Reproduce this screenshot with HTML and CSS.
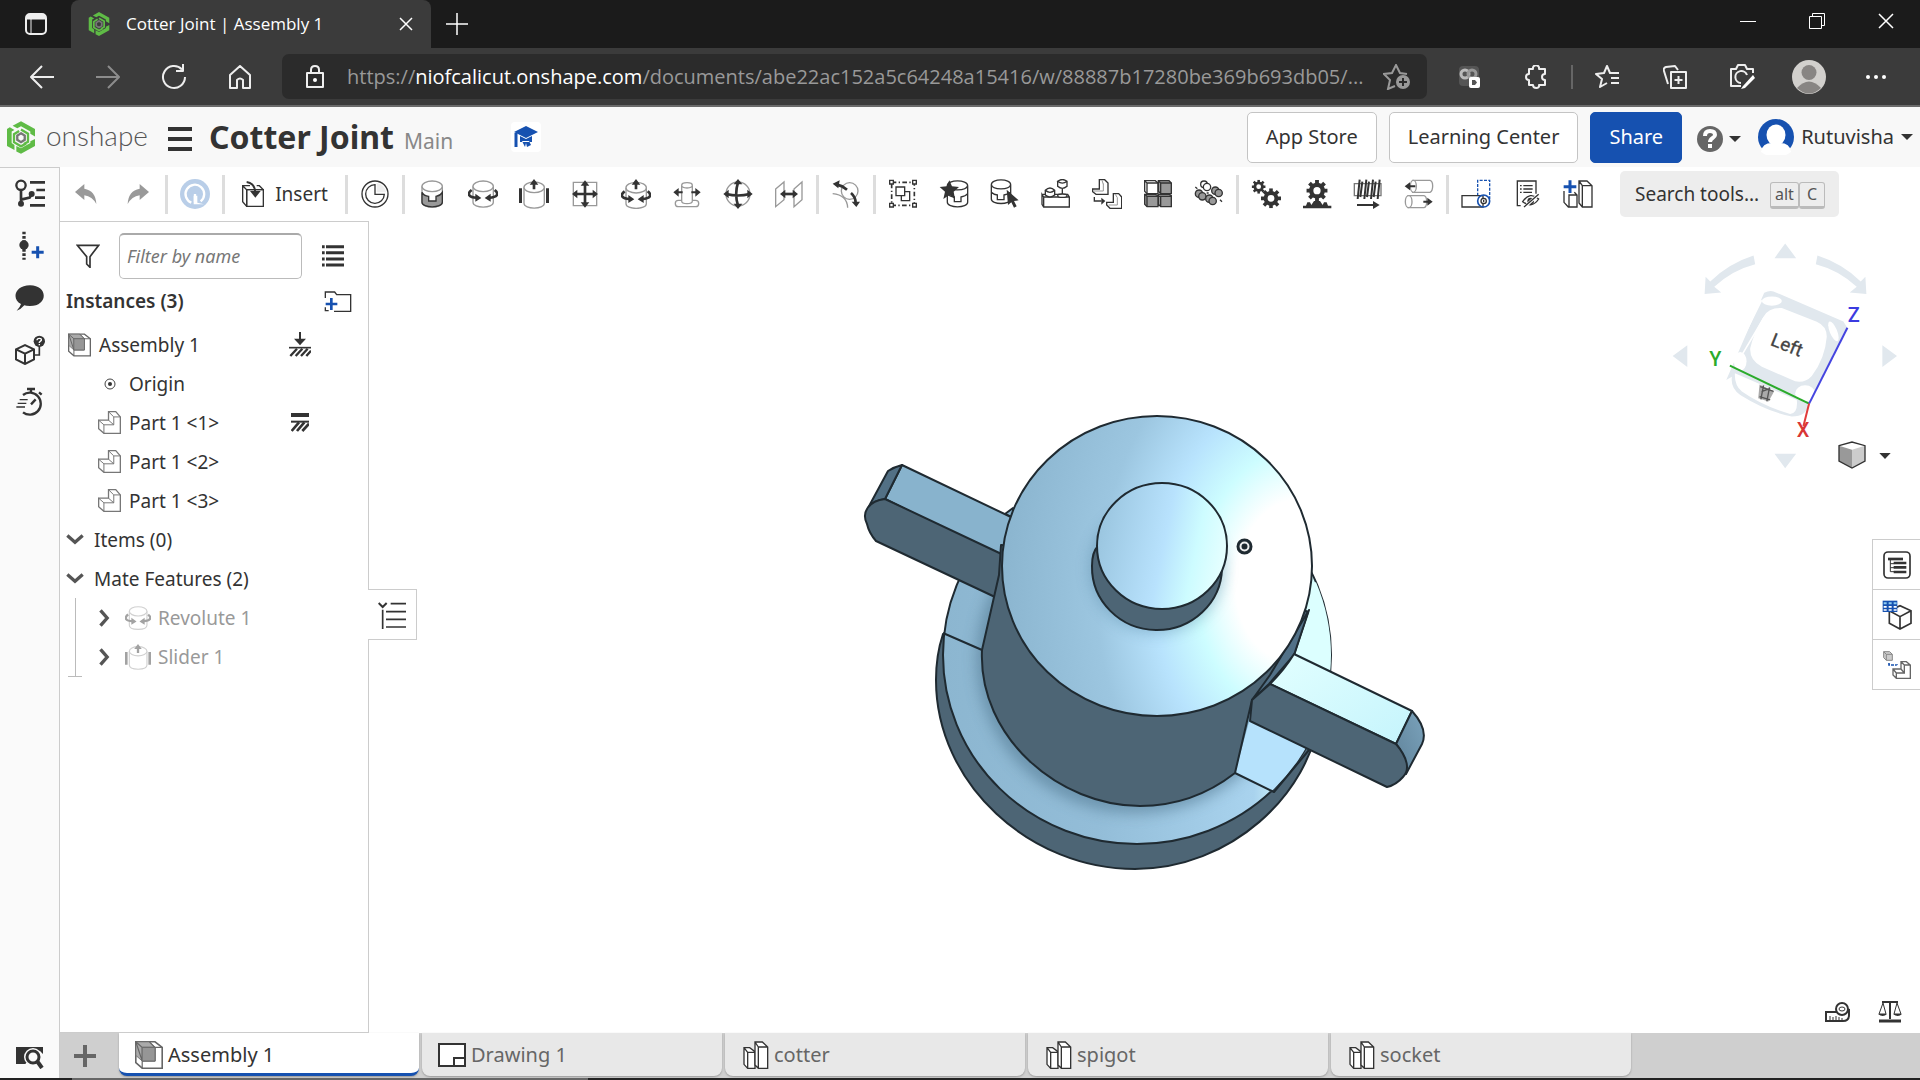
FILE: index.html
```html
<!DOCTYPE html>
<html lang="en">
<head>
<meta charset="utf-8">
<title>Cotter Joint | Assembly 1</title>
<link rel="stylesheet" href="styles.css">
</head>
<body>
<svg class="defs" aria-hidden="true">
  <symbol id="logo" viewBox="0 0 60 70">
    <path d="M30 0 60 17V33L50 27V22L30 11 22 15 12 10zM6 13 16 19 10 22V47L16 51V62L0 53V17zM60 38V53L30 70 20 65V53L30 58 50 47V43z" fill="#5fbb46"/>
    <path d="M30 18 45 27V44L36 49M41 48 30 54 15 45V28L26 21" fill="none" stroke="#5fbb46" stroke-width="5"/>
    <path d="M30 26 38 31V40L30 45 22 40V31z" fill="none" stroke="#777" stroke-width="5"/>
  </symbol>
  <symbol id="part" viewBox="0 0 70 70">
    <path d="M2 28H32V2H54L68 18V68H18L2 54z" fill="#fff" stroke="#777" stroke-width="4"/>
    <path d="M2 28 18 42H48V18H68M32 2 48 18M32 28 48 42M18 42V68" fill="none" stroke="#777" stroke-width="3"/>
  </symbol>
  <symbol id="assembly" viewBox="0 0 70 70">
    <path d="M2 2H50L68 16V68H18L2 54z" fill="#fff" stroke="#666" stroke-width="4"/>
    <path d="M2 2H36L50 16V50H18L2 36z" fill="#aaa" stroke="#666" stroke-width="2"/>
    <path d="M2 2 18 16H50V50H18zM18 16V68M36 2 50 16H68" fill="none" stroke="#666" stroke-width="3"/>
    <path d="M18 16H50V50H18z" fill="#969696" stroke="#666" stroke-width="2"/>
  </symbol>
  <symbol id="studio" viewBox="0 0 78 84">
    <path d="M3 20H20L36 32V82H14L3 70zM14 82V34H36M3 20 14 34" class="ln4"/>
    <path d="M36 3H58L74 18V82H46L36 72zM46 82V18H74M36 3 46 18" class="ln4"/>
  </symbol>
  <symbol id="cyl" viewBox="0 0 90 90">
    <path d="M15 22V70C15 89 76 89 76 70V22" fill="#fff" stroke="#999" stroke-width="4"/>
    <ellipse cx="45.500" cy="22" rx="30.500" ry="16" fill="#fff" stroke="#999" stroke-width="4"/>
  </symbol>
  <symbol id="revolve" viewBox="0 0 90 90">
    <path d="M11 33C-5 45 3 55 26 56M80 33C95 45 87 55 64 56" fill="none" stroke="#333" stroke-width="8"/>
    <path d="M22 44 40 57 22 68zM68 44 50 57 68 68z" fill="#333"/>
  </symbol>
  <symbol id="i-revolute" viewBox="0 0 90 90"><use href="#cyl" width="90" height="90"/><use href="#revolve" width="90" height="90"/></symbol>
  <symbol id="i-slider" viewBox="0 0 90 90"><use href="#cyl" y="3" width="90" height="90"/><path d="M0 28H9V72H0zM81 28H90V72H81zM45 0 58 17H49V31H41V17H32z" fill="#333"/></symbol>
  <symbol id="chev" viewBox="0 0 54 32"><path d="M4 4 27 24 50 4" fill="none" stroke="#555" stroke-width="10"/></symbol>
  <symbol id="gear" viewBox="-50 -50 100 100">
    <circle r="27" fill="none" stroke="#333" stroke-width="20"/>
    <path d="M-9-50H9V-30H-9zM-9 30H9V50H-9zM-50-9H-30V9H-50zM30-9H50V9H30z" fill="#333"/>
    <path d="M-9-50H9V-30H-9zM-9 30H9V50H-9zM-50-9H-30V9H-50zM30-9H50V9H30z" fill="#333" transform="rotate(45)"/>
  </symbol>
</svg>

<header class="browser">
  <div class="titlebar">
    <button class="plain tabmenu" aria-label="Tab actions"><svg width="22" height="22" viewBox="0 0 22 22"><rect x="1" y="1" width="20" height="20" rx="4" fill="none" stroke="#eee" stroke-width="2"/><path d="M2 2H20V6H2zM6 6V21" fill="#eee" stroke="#eee"/></svg></button>
    <div class="btab">
      <svg width="22" height="24"><use href="#logo"/></svg>
      <span>Cotter Joint | Assembly 1</span>
      <button class="plain" aria-label="Close tab"><svg width="14" height="14" viewBox="0 0 28 28"><path d="M2 2 26 26M26 2 2 26" class="w3"/></svg></button>
    </div>
    <button class="plain newtab" aria-label="New tab"><svg width="22" height="22" viewBox="0 0 44 44"><path d="M22 0V44M0 22H44" class="w3"/></svg></button>
    <div class="winctl">
      <button class="plain" aria-label="Minimize"><svg width="16" height="16" viewBox="0 0 16 16"><path d="M0 8.500H16" class="w"/></svg></button>
      <button class="plain" aria-label="Restore"><svg width="16" height="16" viewBox="0 0 16 16"><path d="M.5 3.500H12.500V15.500H.5zM3.500 3V.5H15.500V12.500H13" class="w"/></svg></button>
      <button class="plain" aria-label="Close"><svg width="16" height="16" viewBox="0 0 32 32"><path d="M2 2 30 30M30 2 2 30" class="w3"/></svg></button>
    </div>
  </div>
  <div class="navbar">
    <nav class="navbtns">
      <button class="plain" aria-label="Back"><svg width="26" height="24" viewBox="0 0 26 24"><path d="M25 12H2M13 1 2 12 13 23" class="w2"/></svg></button>
      <button class="plain dim" aria-label="Forward"><svg width="26" height="24" viewBox="0 0 26 24"><path d="M1 12H24M13 1 24 12 13 23" class="w2"/></svg></button>
      <button class="plain" aria-label="Reload"><svg width="26" height="26" viewBox="0 0 26 26"><path d="M24 13A11 11 0 1 1 21 5.500M22 0V7H15" class="w2"/></svg></button>
      <button class="plain" aria-label="Home"><svg width="24" height="24" viewBox="0 0 24 24"><path d="M2 10 12 1 22 10V23H15V15Q12 12 9 15V23H2z" class="w2"/></svg></button>
    </nav>
    <div class="urlbox">
      <svg width="20" height="24" viewBox="0 0 20 24"><path d="M2 8H18V22H2zM6 8V5Q6 1 10 1T14 5V8" class="w2"/><circle cx="10" cy="15" r="2" fill="#fff"/></svg>
      <div class="url" role="textbox" aria-label="Address">https://<b>niofcalicut.onshape.com</b>/documents/abe22ac152a5c64248a15416/w/88887b17280be369b693db05/...</div>
      <button class="plain" aria-label="Add to favorites"><svg width="28" height="26" viewBox="0 0 28 26"><path d="M12 22 5 25 7 16 1 10 9 9 13 1 17 9 24 10" fill="none" stroke="#999" stroke-width="2"/><circle cx="20" cy="18" r="7" fill="#999"/><path d="M20 14V22M16 18H24" stroke="#2b2b2b" stroke-width="2"/></svg></button>
    </div>
    <div class="exts">
      <button class="plain" aria-label="Extension"><svg width="22" height="22" viewBox="0 0 22 22"><rect width="20" height="20" rx="4" fill="#555"/><circle cx="6" cy="8" r="4" fill="none" stroke="#bbb" stroke-width="3"/><circle cx="13" cy="8" r="4" fill="none" stroke="#999" stroke-width="3"/><rect x="10" y="11" width="11" height="11" rx="2" fill="#fff"/><path d="M13 14H16L18 16.500 16 19H13z" fill="#555"/></svg></button>
      <button class="plain" aria-label="Extensions"><svg width="24" height="24" viewBox="0 0 24 24"><path d="M4 4H8C7-1 15-1 14 4H20V9C16 9 16 15 20 15V20H14C15 24 8 24 8 20H4V15C0 15 0 9 4 9z" class="w2"/></svg></button>
      <i class="vr"></i>
      <button class="plain" aria-label="Favorites"><svg width="26" height="24" viewBox="0 0 26 24"><path d="M12 18 5 22 7 14 1 9 9 8 12 1 15 8H24M16 13H24M16 18H24" class="w2"/></svg></button>
      <button class="plain" aria-label="Collections"><svg width="24" height="24" viewBox="0 0 24 24"><path d="M5 19 1 6Q0 3 3 2L12 1 15 5M8 7H23V23H8zM15.500 11V19M11.500 15H19.500" class="w2"/></svg></button>
      <button class="plain" aria-label="Web capture"><svg width="26" height="26" viewBox="0 0 26 26"><path d="M12 22H2V5H7L9 1H16L18 5H24V9M18 11A6 6 0 1 0 12 19" class="w2"/><path d="M24 11 14 22 12 25 16 24 26 14z" fill="#fff"/></svg></button>
      <button class="plain" aria-label="Profile"><svg width="34" height="34" viewBox="0 0 34 34"><circle cx="17" cy="17" r="17" fill="#d2d0cd"/><circle cx="17" cy="12.500" r="7.500" fill="#888583"/><path d="M5 28Q17 15 29 28 17 39 5 28z" fill="#888583"/></svg></button>
      <button class="plain" aria-label="Settings and more"><svg width="22" height="6" viewBox="0 0 22 6"><g fill="#fff"><circle cx="3" cy="3" r="2"/><circle cx="11" cy="3" r="2"/><circle cx="19" cy="3" r="2"/></g></svg></button>
    </div>
  </div>
</header>

<header class="apphead">
  <a class="brand" href="#"><svg width="28" height="33"><use href="#logo"/></svg><span>onshape</span></a>
  <button class="plain menu" aria-label="Menu"><svg width="24" height="24" viewBox="0 0 24 24"><path d="M0 2H24M0 12H24M0 22H24" stroke="#333" stroke-width="4"/></svg></button>
  <h1>Cotter Joint</h1>
  <span class="branch">Main</span>
  <button class="plain cap" aria-label="Education"><svg width="24" height="22" viewBox="0 0 24 22"><path d="M12 0 24 6 12 12 0 6z" fill="#1651b0"/><path d="M6 10 12 13 18 10V16Q12 16 6 16zM8 15 11 21 12 17 13 21 17 19 15 15z" fill="#1651b0"/><path d="M2 7V21" stroke="#1651b0" stroke-width="3"/></svg></button>
  <div class="headright">
    <button class="btn">App Store</button>
    <button class="btn">Learning Center</button>
    <button class="btn primary">Share</button>
    <button class="plain help" aria-label="Help"><svg width="46" height="28" viewBox="0 0 46 28"><circle cx="14" cy="14" r="13" fill="#666"/><path d="M9 11Q9 6 14 6T19 10C19 13 14 13 14 17" fill="none" stroke="#fff" stroke-width="4"/><path d="M12 19H16V23H12z" fill="#fff"/><path d="M33 11H45L39 17z" fill="#333"/></svg></button>
    <button class="plain user"><svg width="36" height="36" viewBox="0 0 36 36"><circle cx="18" cy="18" r="18" fill="#1651b0"/><ellipse cx="18" cy="16" rx="9.500" ry="10.500" fill="#fff"/><path d="M3 33Q4 24 14 24H22Q32 24 33 33L28 36H8z" fill="#fff"/></svg><span>Rutuvisha</span><svg width="12" height="6" viewBox="0 0 12 6"><path d="M0 0H12L6 6z" fill="#333"/></svg></button>
  </div>
</header>

<div class="workspace">
  <aside class="rail">
    <button class="plain" aria-label="Instances"><svg width="30" height="30" viewBox="0 0 90 90"><circle cx="18" cy="19" r="14" fill="none" stroke="#333" stroke-width="7"/><circle cx="18" cy="74" r="9" fill="#333"/><circle cx="50" cy="45" r="9" fill="#333"/><path d="M18 33V74M18 62 44 56 50 45M45 10H90M64 33H90M60 56H90M45 79H90" fill="none" stroke="#333" stroke-width="8"/></svg></button>
    <button class="plain" aria-label="Add"><svg width="30" height="30" viewBox="0 0 90 90"><circle cx="27" cy="42" r="14" fill="#333"/><path d="M27 2V86" stroke="#333" stroke-width="10" stroke-dasharray="8 5"/><path d="M68 46V82M50 64H86" stroke="#1651b0" stroke-width="9"/></svg></button>
    <button class="plain" aria-label="Comments"><svg width="30" height="28" viewBox="0 0 90 84"><path d="M45 4C100 4 100 66 45 66Q32 66 28 64 18 76 5 80 16 68 18 60C-12 45 0 4 45 4z" fill="#333"/></svg></button>
    <button class="plain" aria-label="Part information"><svg width="30" height="30" viewBox="0 0 90 90"><path d="M3 43 30 30 57 43V73L30 87 3 73zM3 43 30 56 57 43M30 56V87" fill="none" stroke="#333" stroke-width="6"/><path d="M60 60H73V30" fill="none" stroke="#333" stroke-width="5"/><circle cx="73" cy="19" r="17" fill="#333"/><path d="M66 16Q66 10 73 10T79 16L73 22V24M73 27V31" fill="none" stroke="#fff" stroke-width="4"/></svg></button>
    <button class="plain" aria-label="Performance"><svg width="30" height="30" viewBox="0 0 90 90"><path d="M24 24A33 33 0 1 1 24 76" fill="none" stroke="#333" stroke-width="7"/><path d="M36 6H60M48 6V16M72 16 80 23M48 52 62 37" stroke="#333" stroke-width="7"/><path d="M14 38H38M8 49H34M4 60H30" stroke="#333" stroke-width="4"/></svg></button>
    <button class="plain last" aria-label="Search tabs"><svg width="28" height="24" viewBox="0 0 28 24"><path d="M0 2H27V9L24 6H12L9 12 12 18H8L0 19z" fill="#333"/><path d="M0 12V19H10L6 12z" fill="#333"/><circle cx="17" cy="12" r="9" fill="#fafafa"/><circle cx="17" cy="12" r="6" fill="none" stroke="#333" stroke-width="3"/><path d="M21 16 26 23" stroke="#333" stroke-width="4"/></svg></button>
  </aside>

  <div class="content">
    <div class="toolbar">
      <button class="tool wide" aria-label="Undo"><svg width="22" height="20" viewBox="0 0 66 60"><path d="M0 24 28 0V14Q62 20 64 60 52 38 28 34V48z" fill="#999"/></svg></button>
      <button class="tool wide" aria-label="Redo"><svg width="22" height="20" viewBox="0 0 66 60"><path d="M66 24 38 0V14Q4 20 2 60 14 38 38 34V48z" fill="#999"/></svg></button>
      <i class="sep"></i>
      <button class="tool" aria-label="Refresh"><svg width="30" height="30" viewBox="0 0 90 90"><circle cx="45" cy="45" r="45" fill="#b9cee8"/><path d="M34 71A28 28 0 1 1 62 67M45 70V45" fill="none" stroke="#fff" stroke-width="7"/><path d="M41 50H52V71L72 76H41z" fill="#fff"/></svg></button>
      <i class="sep"></i>
      <button class="tool insert"><svg width="22" height="26" viewBox="0 0 66 78"><path d="M14 26H64V76H14z" class="ln4"/><path d="M24 14H2V62L14 76V26L2 14M14 26 64 26 52 14H44" fill="none" stroke="#333" stroke-width="4"/><path d="M14 3Q38 6 40 34" fill="none" stroke="#333" stroke-width="6"/><path d="M24 30H56L40 50z" fill="#333"/></svg>Insert</button>
      <i class="sep"></i>
      <button class="tool" aria-label="Mate connector"><svg width="30" height="30" viewBox="0 0 90 90"><circle cx="45" cy="45" r="39" class="ln4"/><path d="M45 17V46H73A28 28 0 1 1 45 17z" class="ln4"/><path d="M50 12A33 33 0 0 1 78 40H50z" fill="#eee"/></svg></button>
      <i class="sep"></i>
      <button class="tool" aria-label="Fastened"><svg width="30" height="30" viewBox="0 0 90 90"><use href="#cyl" width="90" height="90"/><path d="M15 40V70C15 88 76 88 76 70V40Q70 50 57 52V66H35V52Q20 50 15 40z" fill="#999" stroke="#333" stroke-width="4"/></svg></button>
      <button class="tool" aria-label="Revolute"><svg width="30" height="30"><use href="#i-revolute"/></svg></button>
      <button class="tool" aria-label="Slider"><svg width="30" height="30"><use href="#i-slider"/></svg></button>
      <button class="tool" aria-label="Planar"><svg width="30" height="30" viewBox="0 0 90 90"><path d="M10 10H80V80H10z" fill="#fff" stroke="#999" stroke-width="4"/><path d="M45 12V78M12 45H78" stroke="#333" stroke-width="8"/><path d="M45 4 58 20H32zM45 86 58 70H32zM6 45 22 32V58zM84 45 68 32V58z" fill="#333"/></svg></button>
      <button class="tool" aria-label="Cylindrical"><svg width="30" height="30" viewBox="0 0 90 90"><use href="#cyl" y="4" width="90" height="90"/><use href="#revolve" y="4" width="90" height="90"/><path d="M45 0 58 17H49V31H41V17H32z" fill="#333"/></svg></button>
      <button class="tool" aria-label="Pin slot"><svg width="30" height="30" viewBox="0 0 90 90"><rect x="10" y="64" width="70" height="19" rx="9" fill="#fff" stroke="#999" stroke-width="4"/><path d="M29 20V66Q29 74 45 74T61 66V20" fill="#fff" stroke="#999" stroke-width="4"/><ellipse cx="45" cy="19" rx="16" ry="8" fill="#fff" stroke="#999" stroke-width="4"/><path d="M14 40H32M58 40H76" stroke="#333" stroke-width="6"/><path d="M4 40 20 27V53zM86 40 70 27V53z" fill="#333"/></svg></button>
      <button class="tool" aria-label="Ball"><svg width="30" height="30" viewBox="0 0 90 90"><circle cx="45" cy="45" r="36" fill="#fff" stroke="#999" stroke-width="4"/><path d="M45 10Q34 45 45 80M10 45Q45 54 80 45" fill="none" stroke="#333" stroke-width="8"/><path d="M45 0 58 16H32zM45 90 58 74H32zM1 45 17 32V58zM89 45 73 32V58z" fill="#333"/></svg></button>
      <button class="tool" aria-label="Parallel"><svg width="30" height="30" viewBox="0 0 90 90"><path d="M5 30 30 9V62L5 83zM60 30 84 9V62L60 83z" fill="#fff" stroke="#999" stroke-width="4"/><path d="M30 45H60" stroke="#333" stroke-width="8"/><path d="M18 45 34 32V58zM72 45 56 32V58z" fill="#333"/></svg></button>
      <i class="sep"></i>
      <button class="tool" aria-label="Tangent"><svg width="30" height="30" viewBox="0 0 90 90"><circle cx="56" cy="36" r="25" fill="#fff" stroke="#999" stroke-width="4"/><path d="M5 44Q48 48 50 86" fill="none" stroke="#999" stroke-width="4"/><path d="M18 17Q34 20 48 32M60 42Q74 54 74 72" fill="none" stroke="#333" stroke-width="8"/><path d="M5 14 26 4 22 28zM62 68 87 68 76 84z" fill="#333"/></svg></button>
      <i class="sep"></i>
      <button class="tool" aria-label="Group"><svg width="30" height="30" viewBox="0 0 90 90"><path d="M11 10H79V79H11z" fill="none" stroke="#333" stroke-width="5" stroke-dasharray="14 7 4 7"/><g class="ln4"><path d="M5 4H16V15H5zM74 4H85V15H74zM5 73H16V84H5zM74 73H85V84H74zM40 38H65V65H40z"/><path d="M24 24H50V50H24z"/></g></svg></button>
      <button class="tool" aria-label="Named positions"><svg width="30" height="30" viewBox="0 0 90 90"><path d="M25 20V70C25 88 86 88 86 70V20C86 1 25 1 25 20 30 38 82 36 86 20M28 48Q36 54 46 54V68H66V54Q80 52 86 44" class="ln4"/><path d="M31 4 39 22 60 24 44 38 48 60 31 48 13 60 18 38 2 24 23 22z" fill="#333"/></svg></button>
      <button class="tool" aria-label="Select instance"><svg width="30" height="30" viewBox="0 0 90 90"><path d="M4 17V60C4 78 62 78 62 60V17C62-2 4-2 4 17 8 34 58 34 62 17M4 40Q12 48 22 48V62H42V48Q56 46 62 40" class="ln4"/><path d="M50 32 86 64 72 66 80 82 72 86 64 70 54 78z" fill="#333"/></svg></button>
      <button class="tool" aria-label="Replicate"><svg width="30" height="30" viewBox="0 0 90 90"><path d="M5 46H80L85 54V84H8L3 76V46L8 54H85M8 54V84" class="ln4"/><path d="M13 34V48Q27 60 41 48V34Q27 20 13 34 27 46 41 34M50 7V22Q64 34 78 22V7Q64-4 50 7 64 18 78 7M64 30V46" class="ln4"/><ellipse cx="64" cy="50" rx="14" ry="5" class="ln4"/></svg></button>
      <button class="tool" aria-label="Snap mode"><svg width="30" height="30" viewBox="0 0 90 90"><path d="M2 30H22V2H38L48 12V46H12L2 38z" class="ln4"/><path d="M34 16 30 4M34 14V36H6" fill="none" stroke="#999" stroke-width="3"/><path d="M44 70H64V44H80L89 54V88H54L44 78z" class="ln4"/><path d="M76 56 70 46M76 56V78H50" fill="none" stroke="#999" stroke-width="3"/><path d="M7 54V66H28" fill="none" stroke="#333" stroke-width="4"/><path d="M28 56 40 66 28 77z" fill="#333"/></svg></button>
      <button class="tool" aria-label="Linear pattern"><svg width="30" height="30" viewBox="0 0 90 90"><g stroke="#333" stroke-width="4"><path d="M5 5H37L45 12V44H12L5 37z" fill="#fff"/><path d="M46 5H78L85 12V44H53L46 37zM5 46H37L45 50V83H12L5 76zM46 46H78L85 50V83H53L46 76z" fill="#999"/><path d="M5 5 12 12H45M12 12V44M46 5 53 12H85M53 12V44M5 46 12 52H85M12 52V83M53 52V83" fill="none"/></g></svg></button>
      <button class="tool" aria-label="Circular pattern"><svg width="30" height="30" viewBox="0 0 90 90"><g stroke="#333" stroke-width="4" fill="#999"><circle cx="30" cy="16" r="10" fill="#fff"/><circle cx="39" cy="24" r="11" fill="#fff"/><circle cx="64" cy="35" r="11"/><circle cx="74" cy="42" r="11"/><circle cx="15" cy="44" r="11"/><circle cx="25" cy="52" r="11"/><circle cx="46" cy="59" r="11"/><circle cx="56" cy="66" r="11"/><path d="M4 24 10 29M78 62 84 68M38 42H44" /></g></svg></button>
      <i class="sep"></i>
      <button class="tool" aria-label="Gear relation"><svg width="30" height="30" viewBox="0 0 90 90"><use href="#gear" x="2" y="2" width="42" height="42"/><use href="#gear" x="30" y="28" width="60" height="60"/></svg></button>
      <button class="tool" aria-label="Rack and pinion"><svg width="30" height="30" viewBox="0 0 90 90"><use href="#gear" x="13" y="1" width="64" height="68"/><path d="M3 88V80H12L16 70H24L28 78 36 66H54L62 78 66 70H74L78 80H88V88z" fill="#333"/></svg></button>
      <button class="tool" aria-label="Screw relation"><svg width="30" height="30" viewBox="0 0 90 90"><path d="M4 14H84V50H4z" fill="#fff" stroke="#777" stroke-width="4"/><path d="M20 2 14 60M40 2 34 60M60 2 54 60M80 2 74 60M28 8 22 54M48 8 42 54M68 8 62 54" fill="none" stroke="#333" stroke-width="6"/><path d="M12 78H68" stroke="#333" stroke-width="6"/><path d="M60 66 80 78 60 90z" fill="#333"/></svg></button>
      <button class="tool" aria-label="Linear relation"><svg width="30" height="30" viewBox="0 0 90 90"><g fill="#fff" stroke="#999" stroke-width="4"><path d="M26 4H78Q86 6 86 21T78 40H26z"/><ellipse cx="28" cy="22" rx="9" ry="18"/><path d="M12 50H60Q68 52 68 68T60 86H12z"/><ellipse cx="14" cy="68" rx="10" ry="18"/></g><path d="M14 22H34M58 68H74" stroke="#333" stroke-width="6"/><path d="M2 22 18 10V34zM86 68 70 56V80z" fill="#333"/></svg></button>
      <i class="sep"></i>
      <button class="tool" aria-label="Display states"><svg width="30" height="30" viewBox="0 0 90 90"><path d="M50 50V4H86V62" fill="none" stroke="#1651b0" stroke-width="4" stroke-dasharray="9 4"/><path d="M3 50H66V84H3z" class="ln4"/><circle cx="68" cy="66" r="18" fill="none" stroke="#1651b0" stroke-width="5"/><circle cx="68" cy="66" r="8" class="ln4"/><path d="M68 62V70" class="ln4"/></svg></button>
      <button class="tool" aria-label="Bill of materials"><svg width="30" height="30" viewBox="0 0 90 90"><path d="M26 80H16V6H72V44" class="ln4"/><path d="M24 20H29M34 20H62M24 30H29M34 30H62M24 40H29M34 40H60" stroke="#333" stroke-width="4"/><path d="M32 68Q54 36 80 60 60 90 32 68z" class="ln4"/><circle cx="56" cy="66" r="10" fill="#333"/><path d="M38 84 80 46" stroke="#fff" stroke-width="9"/><path d="M36 84 80 46" stroke="#333" stroke-width="4"/></svg></button>
      <button class="tool" aria-label="Create part studio"><svg width="30" height="30" viewBox="0 0 90 90"><path d="M3 36V70L16 84H42V48L34 40M18 84V48H42M48 6H72L87 20V84H58L48 72zM58 84V20H87M48 6 58 20" class="ln4"/><path d="M21 4V42M2 23H40" stroke="#1651b0" stroke-width="9"/></svg></button>
      <label class="search"><input type="text" placeholder="Search tools..." aria-label="Search tools"><kbd>alt</kbd><kbd>C</kbd></label>
    </div>

    <div class="stage">
      <section class="panel">
        <div class="filter">
          <svg width="24" height="24" viewBox="0 0 72 72"><path d="M4 4H68L42 38V70L32 60V38z" class="ln5"/></svg>
          <input type="text" placeholder="Filter by name" aria-label="Filter by name">
          <button class="plain" aria-label="List options"><svg width="22" height="22" viewBox="0 0 66 66"><path d="M0 5H8M12 5H66M0 23H8M12 23H66M0 42H8M12 42H66M0 60H8M12 60H66" stroke="#333" stroke-width="9"/></svg></button>
        </div>
        <div class="insthead"><h2>Instances (3)</h2><button class="plain" aria-label="New folder"><svg width="28" height="23" viewBox="0 0 84 69"><path d="M4 24V6H32L38 14H80V64H40M4 52V62H14M30 64H40" class="ln4"/><path d="M22 24V60M5 42H40" stroke="#1651b0" stroke-width="8"/></svg></button></div>
        <ul class="tree">
          <li><svg width="23" height="24"><use href="#assembly"/></svg><span>Assembly 1</span><svg class="stat" width="22" height="25" viewBox="0 0 66 75"><path d="M33 0V28" stroke="#333" stroke-width="6"/><path d="M15 20H51L33 40z" fill="#333"/><path d="M0 47H66" stroke="#333" stroke-width="5"/><path d="M4 72 24 50M20 72 40 50M36 72 56 50M52 72 66 56" stroke="#333" stroke-width="7"/></svg></li>
          <li class="l1 origin"><svg width="12" height="12" viewBox="0 0 12 12"><circle cx="6" cy="6" r="5" fill="#fff" stroke="#444"/><circle cx="6" cy="6" r="2" fill="#333"/></svg><span>Origin</span></li>
          <li class="l1"><svg width="23" height="23"><use href="#part"/></svg><span>Part 1 &lt;1&gt;</span><svg class="stat" width="18" height="19" viewBox="0 0 54 57"><path d="M0 6H54" stroke="#333" stroke-width="12"/><path d="M0 26H54" stroke="#333" stroke-width="6"/><path d="M2 54 24 28M18 54 40 28M34 54 54 32" stroke="#333" stroke-width="8"/></svg></li>
          <li class="l1"><svg width="23" height="23"><use href="#part"/></svg><span>Part 1 &lt;2&gt;</span></li>
          <li class="l1"><svg width="23" height="23"><use href="#part"/></svg><span>Part 1 &lt;3&gt;</span></li>
          <li class="fold"><svg width="18" height="11"><use href="#chev"/></svg><span>Items (0)</span></li>
          <li class="fold"><svg width="18" height="11"><use href="#chev"/></svg><span>Mate Features (2)</span></li>
        </ul>
        <ul class="tree mates">
          <li><svg width="11" height="18" viewBox="0 0 32 54"><path d="M4 4 24 27 4 50" fill="none" stroke="#555" stroke-width="10"/></svg><svg class="faded" width="26" height="26"><use href="#i-revolute"/></svg><span>Revolute 1</span></li>
          <li><svg width="11" height="18" viewBox="0 0 32 54"><path d="M4 4 24 27 4 50" fill="none" stroke="#555" stroke-width="10"/></svg><svg class="faded" width="26" height="26"><use href="#i-slider"/></svg><span>Slider 1</span></li>
        </ul>
        <button class="handle" aria-label="Toggle list"><svg width="28" height="28" viewBox="0 0 84 84"><path d="M2 6 14 18 26 6" fill="none" stroke="#333" stroke-width="6"/><path d="M38 8H84M24 32H84M24 55H84M24 78H84M14 26V84" stroke="#333" stroke-width="5"/></svg></button>
      </section>

      <main class="viewport">
        <svg class="model" viewBox="840 380 609 495" aria-label="Cotter joint model">
          <defs>
            <radialGradient id="gDisc" gradientUnits="userSpaceOnUse" cx="0" cy="0" r="300" gradientTransform="translate(1296 580) rotate(6) scale(1 1.350)">
              <stop offset="0" stop-color="#fff"/><stop offset=".2" stop-color="#fff"/><stop offset=".33" stop-color="#cdfdff"/><stop offset=".47" stop-color="#b8e3fd"/><stop offset=".66" stop-color="#9cc6e0"/><stop offset="1" stop-color="#8ab4ce"/>
            </radialGradient>
            <linearGradient id="gPin" gradientUnits="userSpaceOnUse" x1="1100" y1="530" x2="1228" y2="556">
              <stop offset="0" stop-color="#9bc6e0"/><stop offset=".5" stop-color="#b8e2fd"/><stop offset=".75" stop-color="#cdfcff"/><stop offset="1" stop-color="#e8ffff"/>
            </linearGradient>
            <linearGradient id="gRim" gradientUnits="userSpaceOnUse" x1="942" y1="0" x2="1332" y2="0">
              <stop offset="0" stop-color="#8cb6d0"/><stop offset=".4" stop-color="#93bdd8"/><stop offset=".8" stop-color="#a9d3ee"/><stop offset=".9" stop-color="#dcffff"/><stop offset="1" stop-color="#d0fcff"/>
            </linearGradient>
            <linearGradient id="gKey" x1="0" y1="0" x2="1" y2="1"><stop offset="0" stop-color="#e2ffff"/><stop offset="1" stop-color="#c5f4fc"/></linearGradient>
            <linearGradient id="gEnd" x1="0" y1="1" x2="1" y2="0"><stop offset="0" stop-color="#5f8299"/><stop offset="1" stop-color="#7ba3bc"/></linearGradient>
            <clipPath id="cRim"><ellipse cx="1137" cy="655" rx="194" ry="189"/></clipPath>
            <clipPath id="cDisc"><ellipse cx="1158" cy="566" rx="155" ry="151"/></clipPath>
            <filter id="soft"><feGaussianBlur stdDeviation="7"/></filter>
          </defs>
          <g stroke="#1f2a31" stroke-width="2" stroke-linejoin="round">
            <path d="M943 634C937 652 936 666 936 680 936 784 1030 869 1135 869 1230 869 1310 795 1320 714L1328 655z" fill="#4d6575"/>
            <ellipse cx="1137" cy="655" rx="194" ry="189" fill="url(#gRim)"/>
            <g clip-path="url(#cRim)" stroke="none">
              <ellipse cx="1136" cy="658" rx="160" ry="156" fill="#4a6f88" opacity=".5" filter="url(#soft)"/>
              <path d="M1250 718 1320 756 1274 793 1235 773z" fill="#b6e2fc"/>
              <path d="M1300 590 1340 570V680L1285 650z" fill="#dcffff"/>
            </g>
            <path d="M943 633 982 650M1235 773 1274 792 1309 750" fill="none"/>
            <path d="M1005 514 1013 508V518z" fill="#88b3cd"/>
            <path d="M902 465 1013 518 1008 560 885 499z" fill="#88b3cd"/>
            <path d="M902 465Q894 467 888 471L868 508Q874 500 885 499z" fill="#527085"/>
            <path d="M885 499C869 501 861 512 867 524Q869 533 876 541L995 597 1010 558z" fill="#4d6575"/>
            <path d="M1001 545 999 575 982 650C978 738 1060 806 1140 806 1176 806 1208 794 1235 773L1252 700 1294 655 1308 612 1200 560z" fill="#4d6575"/>
            <path d="M1252 700 1269 684 1294 655 1309 610 1270 675z" fill="#527188"/>
            <path d="M1294 654 1412 711 1396 744 1270 684Q1285 669 1294 654z" fill="url(#gKey)"/>
            <path d="M1412 711C1421 721 1427 733 1422 744L1406 774Q1406 756 1396 744z" fill="url(#gEnd)"/>
            <path d="M1270 684 1396 744C1408 758 1410 770 1403 777Q1396 785 1387 787L1250 721 1252 700z" fill="#4d6575"/>
            <ellipse cx="1157" cy="566" rx="155" ry="150" fill="url(#gDisc)"/>
            <g clip-path="url(#cDisc)" stroke="none"><ellipse cx="1157" cy="568" rx="68" ry="66" fill="#4a7a98" opacity=".35" filter="url(#soft)"/></g>
            <path d="M1098 546Q1092 552 1092 566A65 63 0 0 0 1222 568L1225 556z" fill="#4d6575"/>
            <ellipse cx="1162" cy="546" rx="65" ry="63" fill="url(#gPin)"/>
            <circle cx="1244.500" cy="546.500" r="6.500" fill="#eee" stroke-width="3"/><circle cx="1244.500" cy="546.500" r="2" fill="#222"/>
          </g>
        </svg>

        <div class="viewnav">
          <svg class="cube" viewBox="80 60 700 690" aria-label="View cube">
            <g fill="#e1e8ee">
              <path d="M435 70 468 114H403zM435 745 468 702H403zM97 408 141 376V441zM771 408 727 376V441z"/>
              <path d="M340 106 345 132Q275 150 222 200L243 217 193 222 196 170 210 184Q265 130 340 106zM532 106 527 132Q597 150 650 200L629 217 679 222 676 170 662 184Q607 130 532 106z"/>
              <path d="M372 218Q388 210 400 214L610 304 622 324 508 550Q500 590 455 590 380 575 300 525 270 505 275 470L258 480z"/>
            </g>
            <g fill="#fff">
              <path d="M370 290Q385 262 425 264L530 305Q560 318 560 350 555 415 515 468 495 490 465 484L365 440Q328 422 330 385 340 340 370 290z"/>
              <ellipse cx="395" cy="243" rx="30" ry="14"/><ellipse cx="580" cy="334" rx="11" ry="32" transform="rotate(-22 580 334)"/><ellipse cx="300" cy="424" rx="19" ry="28"/><ellipse cx="495" cy="520" rx="30" ry="24"/>
              <path d="M284 460 470 540Q474 580 450 582 370 560 305 515 282 495 284 460zM362 238 366 242 284 408 280 408zM370 290 374 294 308 404 304 402z"/>
            </g>
            <path d="M269 437 507 551" stroke="#2bab2b" stroke-width="6"/><path d="M507 551 622 323" stroke="#4545e0" stroke-width="6"/><path d="M507 551 490 618" stroke="#e03b3b" stroke-width="6"/>
            <g class="axis"><text x="623" y="305" fill="#3b3be0">Z</text><text x="207" y="438" fill="#2bab2b">Y</text><text x="470" y="652" fill="#d93636">X</text></g>
            <text class="face" transform="translate(388 374) rotate(22)">Left</text>
            <path d="M358 494 402 514 385 545 354 535z" fill="#aaa"/><path d="M360 500 400 514M364 515 390 505M358 530 390 540M370 496 362 538M388 502 380 544" stroke="#555" stroke-width="4"/>
          </svg>
          <button class="plain shade" aria-label="View options"><svg width="54" height="28" viewBox="0 0 162 84"><path d="M3 14 42 3 81 14V60L42 81 3 60z" fill="#fff"/><path d="M3 14 42 26V81L3 60z" fill="#999"/><path d="M42 26 81 14V60L42 81z" fill="#ccc"/><path d="M3 14 42 3 81 14V60L42 81 3 60z" fill="none" stroke="#333" stroke-width="4"/><path d="M124 36H158L141 54z" fill="#333"/></svg></button>
        </div>

        <div class="dock">
          <button aria-label="Structure"><svg width="28" height="28" viewBox="0 0 84 84"><rect x="3" y="3" width="78" height="78" rx="12" class="ln5"/><path d="M15 24H60" stroke="#333" stroke-width="8"/><path d="M32 36H70M32 49H70M32 63H70" stroke="#333" stroke-width="8"/><path d="M22 26V62H34M22 38H34M22 50H34" fill="none" stroke="#333" stroke-width="3"/></svg></button>
          <button aria-label="Configurations"><svg width="30" height="30" viewBox="0 0 90 90"><path d="M22 32 54 17 87 32V70L54 87 22 70zM22 32 54 50 87 32M54 50V87" class="ln5"/><path d="M2 2H46V36H2z" fill="#1651b0"/><path d="M5 7H14V13H5zM20 7H29V13H20zM35 7H44V13H35z" fill="#8fcdf2"/><path d="M5 18H14V23H5zM20 18H29V23H20zM35 18H44V23H35zM5 28H14V32H5zM20 28H29V32H20zM35 28H44V32H35z" fill="#fff"/></svg></button>
          <button aria-label="In-context"><svg width="28" height="28" viewBox="0 0 84 84"><path d="M2 2H20L28 10V28H10L2 20z" fill="#ccc" stroke="#888" stroke-width="3"/><path d="M2 2 10 10H28M10 10V28" stroke="#888" stroke-width="3" fill="none"/><path d="M18 36V42H46V50" fill="none" stroke="#1651b0" stroke-width="5" stroke-dasharray="9 3"/><path d="M30 54H54V32H70L82 42V82H40L30 72zM30 54 40 66H64V42L54 32M64 42H82M40 66V82M54 54 64 66" fill="#fff" stroke="#666" stroke-width="4"/></svg></button>
        </div>

        <div class="measure">
          <button class="plain" aria-label="Measure"><svg width="26" height="20" viewBox="0 0 26 20"><path d="M1 10H14L24 8V13Q24 19 18 19H1z" fill="#fff" stroke="#333" stroke-width="2"/><circle cx="17" cy="7" r="6" fill="#fff" stroke="#333" stroke-width="2"/><ellipse cx="17" cy="7" rx="3" ry="2" fill="#fff" stroke="#333"/><path d="M5 18V14M8 18V15M11 18V14M14 18V15M17 18V16" stroke="#333"/></svg></button>
          <button class="plain" aria-label="Mass properties"><svg width="24" height="24" viewBox="0 0 24 24"><path d="M4 2H20M12 2V19" stroke="#333" stroke-width="2"/><path d="M5 3 1 14H8zM19 3 16 14H23z" fill="#fff" stroke="#333"/><path d="M0 14H9Q5 18 0 14zM15 14H24Q20 18 15 14z" fill="#333"/><path d="M1 21H23" stroke="#333" stroke-width="3"/></svg></button>
        </div>
      </main>
    </div>

    <nav class="doctabs">
      <button class="plain add" aria-label="Add tab"><svg width="24" height="24" viewBox="0 0 24 24"><path d="M12 1V23M1 12H23" stroke="#666" stroke-width="4"/></svg></button>
      <button class="dtab active"><svg width="28" height="28"><use href="#assembly"/></svg>Assembly 1</button>
      <button class="dtab"><svg width="28" height="24" viewBox="0 0 28 24"><path d="M1 1H27V23H1zM16 23V15H27" fill="#fff" stroke="#333" stroke-width="2"/></svg>Drawing 1</button>
      <button class="dtab studio"><svg width="26" height="28"><use href="#studio"/></svg>cotter</button>
      <button class="dtab studio"><svg width="26" height="28"><use href="#studio"/></svg>spigot</button>
      <button class="dtab studio"><svg width="26" height="28"><use href="#studio"/></svg>socket</button>
    </nav>
  </div>
</div>
<footer class="taskbar"><i></i></footer>
</body>
</html>
```
FILE: styles.css
```css
* { box-sizing: border-box; }
body { margin: 0; min-height: 100vh; display: flex; flex-direction: column; background: #fff; color: #333; font: 19px/24px "Noto Sans", "Open Sans", sans-serif; overflow: hidden; }
button, input, kbd { font: inherit; color: inherit; }
button { cursor: pointer; }
svg { display: block; flex: none; }
i { display: block; flex: none; }
.defs { position: absolute; width: 0; height: 0; }
.plain { border: 0; background: none; padding: 0; display: flex; align-items: center; justify-content: center; flex: none; }
.w { fill: none; stroke: #fff; stroke-width: 1; }
.w2 { fill: none; stroke: #eee; stroke-width: 2; stroke-linejoin: round; }
.w3 { fill: none; stroke: #fff; stroke-width: 3; }
.ln4 { fill: #fff; stroke: #333; stroke-width: 4; }
.ln5 { fill: #fff; stroke: #333; stroke-width: 5; }

/* browser chrome */
.browser { background: #3b3b3b; border-bottom: 2px solid #6a6a6a; font-family: "Open Sans", "Noto Sans", sans-serif; }
.titlebar { height: 48px; display: flex; background: #1b1b1b; color: #fff; }
.tabmenu { width: 71px; }
.btab { width: 360px; display: flex; align-items: center; padding: 0 18px 0 17px; background: #3b3b3b; border-radius: 8px 8px 0 0; font-size: 17px; }
.btab span { margin-left: 16px; flex: 1; white-space: nowrap; }
.newtab { width: 52px; }
.winctl { margin-left: auto; display: flex; height: 42px; }
.winctl button { width: 69px; }
.navbar { height: 57px; display: flex; align-items: center; }
.navbtns { display: flex; padding: 0 9px; }
.navbtns button { width: 66px; }
.dim { opacity: .45; }
.urlbox { flex: 1; min-width: 0; height: 45px; padding: 0 16px 0 23px; display: flex; align-items: center; background: #2b2b2b; border-radius: 7px; color: #999; }
.url { flex: 1; min-width: 0; margin: 0 8px 0 22px; overflow: hidden; white-space: nowrap; font-size: 20px; line-height: 36px; }
.url b { font-weight: 400; color: #fff; }
.exts { display: flex; align-items: center; padding-left: 9px; padding-right: 11px; }
.exts button { width: 67px; }
.vr { width: 2px; height: 24px; margin: 0 1px; background: #666; }

/* document header */
.apphead { height: 60px; display: flex; align-items: center; padding: 0 7px; background: #f8f8f8; font-size: 20px; }
.brand { display: flex; align-items: center; color: #555; text-decoration: none; font: 300 28px/32px Lato, sans-serif; }
.brand span { margin: 0 0 4px 11px; width: 103px; }
.menu { margin: 4px 17px 0 19px; }
.apphead h1 { margin: 0; font-size: 32px; line-height: 40px; font-weight: 700; white-space: nowrap; }
.branch { margin: 7px 58px 0 10px; font-size: 21px; color: #888; }
.cap { width: 30px; height: 30px; background: #fff; border-radius: 4px; }
.headright { margin-left: auto; display: flex; align-items: center; gap: 12px; }
.btn { height: 51px; padding: 0 18px; background: #fff; border: 1px solid #c4c4c4; border-radius: 5px; white-space: nowrap; }
.primary { background: #1651b0; border-color: #1651b0; color: #fff; }
.help { margin: 4px 4px 0 2px; }
.user { gap: 7px; }

/* left rail */
.workspace { flex: 1; display: flex; min-height: 0; }
.rail { width: 60px; flex: none; display: flex; flex-direction: column; background: #fafafa; border: 1px solid #ccc; border-width: 1px 1px 0 0; }
.rail button { height: 52px; }
.rail .last { margin-top: auto; height: 42px; }
.content { flex: 1; min-width: 0; display: flex; flex-direction: column; }

/* toolbar */
.toolbar { height: 54px; display: flex; align-items: center; flex: none; }
.tool { width: 51px; height: 44px; padding: 0 1px 0 0; border: 0; background: none; display: flex; align-items: center; justify-content: center; flex: none; }
.wide { width: 52px; }
.insert { width: 117px; gap: 11px; }
.sep { width: 3px; height: 39px; margin: 0 2px 0 1px; background: #ddd; }
.search { width: 219px; height: 46px; margin-left: 16px; padding: 0 15px; display: flex; align-items: center; background: #ededed; border-radius: 5px; }
.search input { width: 135px; padding: 0; border: 0; background: none; outline: 0; }
.search input::placeholder { color: #333; opacity: 1; }
kbd { height: 27px; margin-top: 2px; padding: 0 4px; border: 1px solid #bbb; border-bottom-width: 3px; border-radius: 3px; font-size: 16px; line-height: 23px; color: #555; }
kbd + kbd { padding: 0 7px; }

/* instance panel */
.stage { flex: 1; min-height: 0; display: flex; }
.panel { position: relative; width: 309px; flex: none; border: 1px solid #ccc; border-width: 1px 1px 1px 0; background: #fff; }
.filter { height: 67px; padding: 0 24px 0 16px; display: flex; align-items: center; }
.filter input { width: 183px; height: 46px; margin: 0 auto 0 19px; padding: 0 7px; border: 1px solid #bbb; border-top: 2px solid #aaa; border-radius: 5px; font-size: 18px; }
.filter input::placeholder { font-style: italic; color: #777; opacity: 1; }
.insthead { height: 36px; padding: 0 16px 12px 6px; display: flex; align-items: center; justify-content: space-between; }
.insthead h2 { margin: 0; font-size: 19px; font-weight: 600; line-height: 24px; }
.tree { list-style: none; margin: 0; padding: 0; }
.tree li { height: 39px; padding-left: 8px; display: flex; align-items: center; gap: 8px; white-space: nowrap; }
.tree .stat { margin-left: auto; margin-right: 57px; }
.tree li.l1 { padding-left: 38px; gap: 8px; }
.tree li.l1 .stat { margin-right: 59px; }
.tree li.origin { padding-left: 44px; gap: 13px; }
.tree li.fold { padding-left: 6px; gap: 10px; }
.mates { position: relative; padding-left: 15px; }
.mates::before { content: ""; position: absolute; left: 8px; top: 0; width: 14px; height: 78px; border-bottom: 1px solid #bbb; background: linear-gradient(#bbb, #bbb) 50% 0 / 1px 100% no-repeat; }
.mates li { padding-left: 24px; gap: 7px; color: #999; }
.mates li svg:first-child { margin-right: 8px; }
.faded { opacity: .45; }
.handle { position: absolute; left: 308px; top: 367px; width: 49px; height: 51px; padding: 0 0 0 10px; background: #fff; border: 1px solid #ccc; border-left: 0; display: flex; align-items: center; }

/* canvas */
.viewport { position: relative; flex: 1; min-width: 0; display: flex; align-items: center; justify-content: center; }
.model { width: 609px; height: 495px; }
.viewnav { position: absolute; top: 19px; right: 20px; width: 233px; }
.cube { width: 233px; height: 230px; }
.axis { font: 500 60px Roboto, sans-serif; }
.face { font: 56px Roboto, sans-serif; fill: #444; stroke: #444; stroke-width: 1; }
.shade { position: absolute; left: 171px; top: 201px; }
.dock { position: absolute; right: 0; top: 318px; width: 48px; border: 1px solid #ccc; border-width: 1px 0 0 1px; }
.dock button { width: 47px; height: 50px; padding: 0; display: flex; align-items: center; justify-content: center; background: #fff; border: 0; border-bottom: 1px solid #ccc; }
.measure { position: absolute; right: 18px; bottom: 9px; display: flex; align-items: center; gap: 27px; }

/* document tabs */
.doctabs { height: 45px; flex: none; display: flex; gap: 3px; background: #cfcfcf; }
.add { width: 56px; padding-right: 7px; }
.dtab { flex: 0 1 300px; height: 43px; padding: 0 16px; display: flex; align-items: center; gap: 5px; background: #e8e8e8; border: 0; border-radius: 0 0 8px 8px; box-shadow: 0 1px 2px #999; color: #666; font-size: 20px; white-space: nowrap; }
.studio { padding-left: 18px; }
.dtab.active { background: #fff; color: #333; border-bottom: 3px solid #1651b0; padding-top: 3px; }
.taskbar { height: 2px; background: #222; }
.taskbar i { width: 516px; height: 2px; margin-left: 72px; background: #666; }
```
